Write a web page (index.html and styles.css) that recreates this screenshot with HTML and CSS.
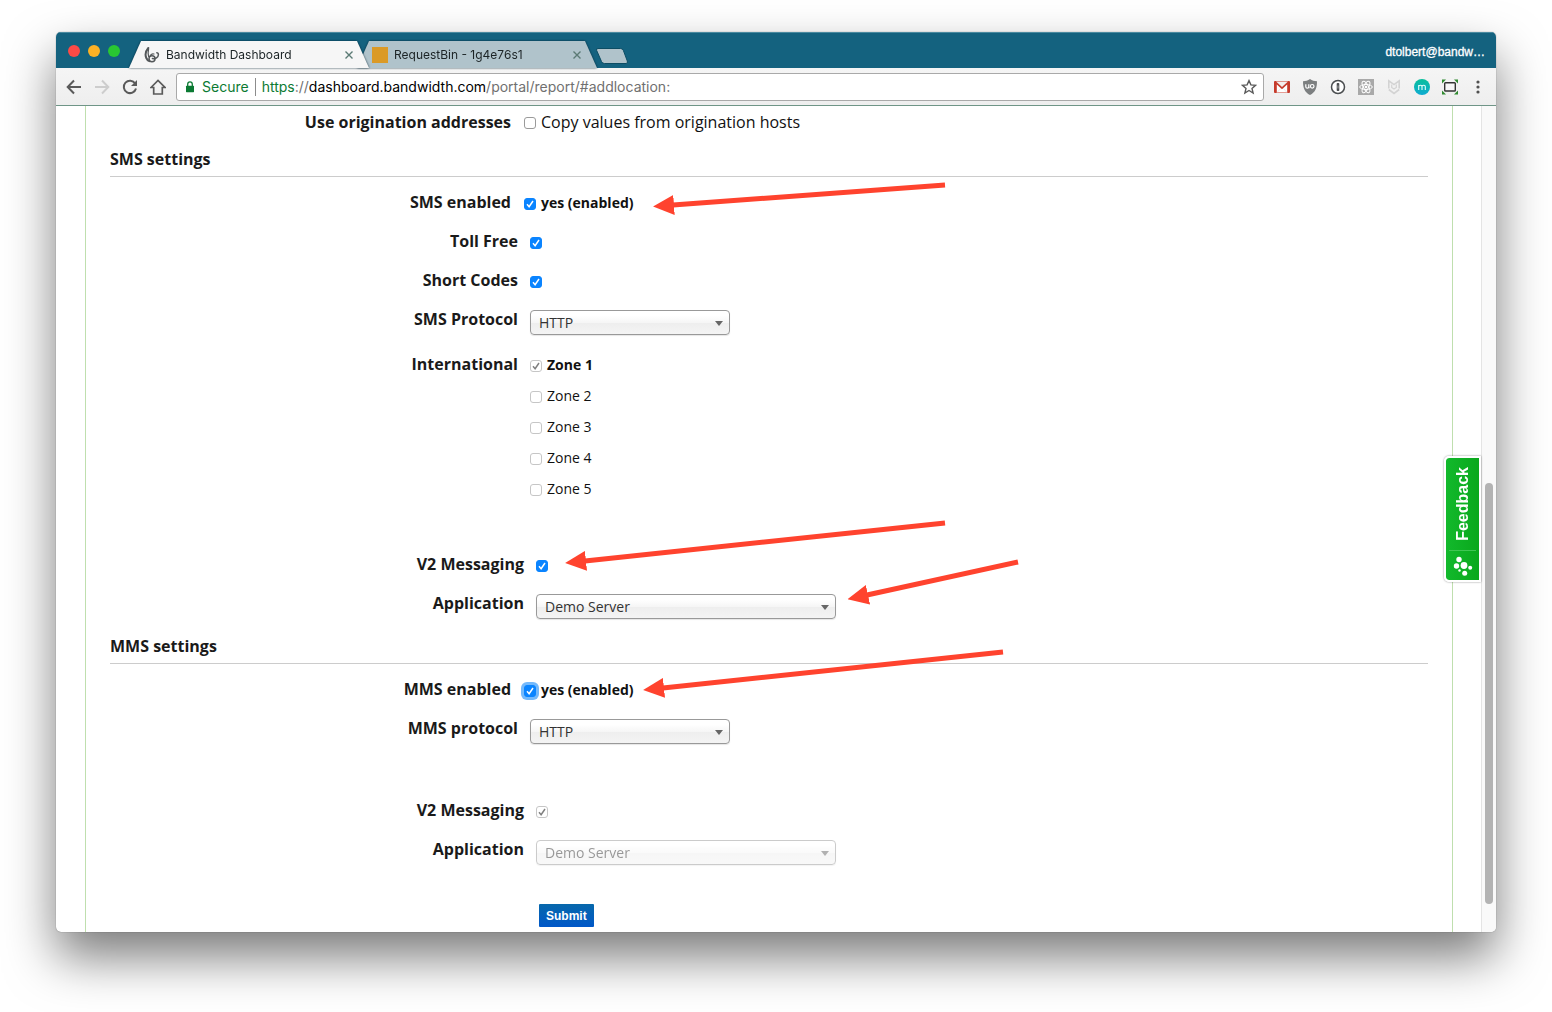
FILE: index.html
```html
<!DOCTYPE html>
<html lang="en">
<head>
<meta charset="utf-8">
<title>Bandwidth Dashboard</title>
<link rel="stylesheet" href="styles.css">
</head>
<body>
<div class="window">
  <header class="titlebar">
    <div class="lights">
      <button class="light light-close" aria-label="Close window"></button>
      <button class="light light-min" aria-label="Minimize window"></button>
      <button class="light light-zoom" aria-label="Zoom window"></button>
    </div>
    <div class="tabs">
      <div class="tab tab-active">
        <div class="tab-shape">
          <svg class="favicon" viewBox="0 0 16 16" fill="none" stroke="#54585a" stroke-linecap="round">
            <path stroke-width="2" d="M4.300 1C1.800 4 1 8 2.300 11c.7 1.600 1.700 2.600 3 3.200"/>
            <path stroke-width="1.200" d="M4.600 2C3.900 5 4 7.500 4.600 9.500"/>
            <circle stroke-width="1.500" cx="8" cy="11.700" r="3"/>
            <path stroke-width="1.200" d="M6 9.300c.6-1.700 2.400-2.800 4-2.300"/>
            <path stroke-width="1.500" d="M8.400 11.500c3 .6 5.900-1.200 6-3.800 0-1.200-.7-1.900-1.600-1.900"/>
          </svg>
          <span class="tab-title">Bandwidth Dashboard</span>
          <button class="tab-close" aria-label="Close tab"><svg viewBox="0 0 8 8"><path d="M0.500 0.500l7 7M7.500 0.500l-7 7"/></svg></button>
        </div>
      </div>
      <div class="tab">
        <div class="tab-shape">
          <span class="favicon favicon-bin"></span>
          <span class="tab-title">RequestBin - 1g4e76s1</span>
          <button class="tab-close" aria-label="Close tab"><svg viewBox="0 0 8 8"><path d="M0.500 0.500l7 7M7.500 0.500l-7 7"/></svg></button>
        </div>
      </div>
      <button class="new-tab" aria-label="New tab">
        <svg viewBox="0 0 34 18"><path d="M3 1.500h22.500q2 0 2.800 1.800l4 10.700q.9 2.500-1.300 2.500H9.500q-2.200 0-3-2L1.600 3.300Q1 1.500 3 1.500z" fill="#b0c3cb" stroke="#0d4d64"/></svg>
      </button>
    </div>
    <span class="account">dtolbert@bandw…</span>
  </header>

  <nav class="toolbar" aria-label="Browser toolbar">
    <div class="group">
      <button class="tool" aria-label="Back"><svg viewBox="0 0 16 16" class="line"><path d="M15 8H2M8 1.500L1.700 8 8 14.500"/></svg></button>
      <button class="tool tool-off" aria-label="Forward" disabled><svg viewBox="0 0 16 16" class="line"><path d="M1 8h13M8 1.500L14.300 8 8 14.500"/></svg></button>
      <button class="tool" aria-label="Reload"><svg viewBox="0 0 16 16" class="line"><path d="M13.200 4.500A6.200 6.200 0 1 0 14 9.500"/><path d="M15 1v6H9z" fill="#5a5a5a" stroke="none"/></svg></button>
      <button class="tool" aria-label="Home"><svg viewBox="0 0 16 16" class="line"><path d="M1 8.500L8 1.400l7 7.100h-2.700V15H3.700V8.500z" stroke-width="1.700"/></svg></button>
    </div>
    <div class="omnibox">
      <svg class="lock" viewBox="0 0 10 12"><path d="M2.700 5V3.200a2.300 2.300 0 0 1 4.600 0V5" fill="none" stroke="#0b7a33" stroke-width="1.300"/><rect x="1" y="4.800" width="8" height="6.400" rx=".6" fill="#0b7a33"/></svg>
      <span class="secure">Secure</span>
      <div class="url" contenteditable="true" role="textbox" aria-label="Address" spellcheck="false"><span class="url-scheme">https</span><span class="url-rest">://</span>dashboard.bandwidth.com<span class="url-rest">/portal/report/#addlocation:</span></div>
      <button class="star" aria-label="Bookmark this page"><svg viewBox="0 0 16 16"><path d="M8 1.600l1.900 4.300 4.600.4-3.500 3.100 1.100 4.600L8 11.500 3.900 14 5 9.400 1.500 6.300l4.600-.4z" fill="none" stroke="#5a5a5a" stroke-width="1.400"/></svg></button>
    </div>
    <div class="group">
      <button class="tool" aria-label="Gmail"><svg viewBox="0 0 16 16"><rect y="2" width="16" height="12" rx="1" fill="#c63a2b"/><path d="M2.800 13.500V5.500L8 10.200l5.200-4.700v8z" fill="#fff"/><path d="M2 2.500h12L8 8z" fill="#f3eeee"/><path d="M3 13.500l3.600-4M13 13.500l-3.600-4" stroke="#ddd" stroke-width=".7"/></svg></button>
      <button class="tool" aria-label="uBlock"><svg viewBox="0 0 16 16"><path d="M8 0c2 1.500 4.500 2.200 7 2.200C15 9 13.500 13 8 16 2.500 13 1 9 1 2.200 3.500 2.200 6 1.500 8 0z" fill="#7c7f80"/><path d="M3.800 5.300v2.400a1.500 1.500 0 0 0 3 0V5.300M7 9.300V8" fill="none" stroke="#fff" stroke-width="1.200"/><circle cx="10.200" cy="7.300" r="1.800" fill="none" stroke="#fff" stroke-width="1.200"/></svg></button>
      <button class="tool" aria-label="1Password"><svg viewBox="0 0 16 16"><circle cx="8" cy="8" r="6.500" fill="#fff" stroke="#4b4e50" stroke-width="1.500"/><rect x="6.700" y="3.900" width="2.600" height="8.200" rx=".8" fill="#4b4e50"/><path d="M8 6.500v3" stroke="#bbb" stroke-width=".8"/></svg></button>
      <button class="tool" aria-label="React tools"><svg viewBox="0 0 16 16"><rect width="16" height="16" fill="#a9a9a9"/><g fill="none" stroke="#fff"><ellipse cx="8" cy="8" rx="6.300" ry="2.500"/><ellipse cx="8" cy="8" rx="6.300" ry="2.500" transform="rotate(60 8 8)"/><ellipse cx="8" cy="8" rx="6.300" ry="2.500" transform="rotate(120 8 8)"/></g><circle cx="8" cy="8" r="1.300" fill="#fff"/></svg></button>
      <button class="tool" aria-label="SiteAdvisor"><svg viewBox="0 0 16 16" fill="none" stroke="#d3d3d3" stroke-width="1.600"><path d="M2.800 9.500V1.800L8 5.600l5.200-3.800v7.700"/><path d="M2.800 10.500L8 14.500l5.200-4"/><path d="M5.700 5.500v3L8 10l2.300-1.500v-3" stroke-width="1.200"/></svg></button>
      <button class="tool" aria-label="Momentum"><svg viewBox="0 0 16 16"><defs><linearGradient id="teal" x1="0" y1="0" x2="0" y2="1"><stop offset="0" stop-color="#08bf9b"/><stop offset="1" stop-color="#0fabd2"/></linearGradient></defs><circle cx="8" cy="8" r="8" fill="url(#teal)"/><path d="M4.700 11V6M4.700 7.500c.3-1.600 3.300-1.800 3.300.3V11M8 7.500c.3-1.600 3.300-1.800 3.300.3V11" fill="none" stroke="#e8fffb" stroke-width="1.100"/></svg></button>
      <button class="tool" aria-label="Window resizer"><svg viewBox="0 0 16 16"><rect x="2.700" y="3.800" width="10.600" height="8.200" rx=".8" fill="#f6f6f6" stroke="#333" stroke-width="1.400"/><path d="M0 .5h4L0 4.500zM16 .5h-4l4 4zM0 15.500h4l-4-4zM16 15.500h-4l4-4z" fill="#2f8a2f"/></svg></button>
      <button class="tool" aria-label="Menu"><svg viewBox="0 0 16 16" fill="#505050"><circle cx="8" cy="3" r="1.600"/><circle cx="8" cy="8" r="1.600"/><circle cx="8" cy="13" r="1.600"/></svg></button>
    </div>
  </nav>

  <div class="viewport">
    <main class="page">
      <form class="form">
        <div class="row">
          <label class="name" for="origin">Use origination addresses</label>
          <div class="choice choice-large"><input type="checkbox" id="origin"><label for="origin">Copy values from origination hosts</label></div>
        </div>

        <section class="section">
          <h2>SMS settings</h2>
          <div class="rows">
            <div class="row">
              <label class="name" for="sms">SMS enabled</label>
              <div class="choice"><input type="checkbox" id="sms" checked><label class="strong" for="sms">yes (enabled)</label></div>
            </div>
            <div class="row nested">
              <label class="name" for="tollfree">Toll Free</label>
              <div class="choice"><input type="checkbox" id="tollfree" checked></div>
            </div>
            <div class="row nested">
              <label class="name" for="short">Short Codes</label>
              <div class="choice"><input type="checkbox" id="short" checked></div>
            </div>
            <div class="row nested">
              <label class="name" for="smsproto">SMS Protocol</label>
              <div class="pick"><select id="smsproto"><option>HTTP</option></select></div>
            </div>
            <div class="row nested" role="group" aria-labelledby="intl">
              <span class="name" id="intl">International</span>
              <div class="zones">
                <div class="choice"><input type="checkbox" id="zone1" checked disabled><label class="strong" for="zone1">Zone 1</label></div>
                <div class="choice"><input type="checkbox" id="zone2" disabled><label for="zone2">Zone 2</label></div>
                <div class="choice"><input type="checkbox" id="zone3" disabled><label for="zone3">Zone 3</label></div>
                <div class="choice"><input type="checkbox" id="zone4" disabled><label for="zone4">Zone 4</label></div>
                <div class="choice"><input type="checkbox" id="zone5" disabled><label for="zone5">Zone 5</label></div>
              </div>
            </div>
          </div>
          <div class="rows rows-later">
            <div class="row deep">
              <label class="name" for="smsv2">V2 Messaging</label>
              <div class="choice"><input type="checkbox" id="smsv2" checked></div>
            </div>
            <div class="row deep">
              <label class="name" for="smsapp">Application</label>
              <div class="pick pick-wide"><select id="smsapp"><option>Demo Server</option></select></div>
            </div>
          </div>
        </section>

        <section class="section">
          <h2>MMS settings</h2>
          <div class="rows">
            <div class="row">
              <label class="name" for="mms">MMS enabled</label>
              <div class="choice"><input class="ring" type="checkbox" id="mms" checked><label class="strong" for="mms">yes (enabled)</label></div>
            </div>
            <div class="row nested">
              <label class="name" for="mmsproto">MMS protocol</label>
              <div class="pick"><select id="mmsproto"><option>HTTP</option></select></div>
            </div>
          </div>
          <div class="rows rows-later">
            <div class="row deep">
              <label class="name" for="mmsv2">V2 Messaging</label>
              <div class="choice"><input type="checkbox" id="mmsv2" checked disabled></div>
            </div>
            <div class="row deep">
              <label class="name" for="mmsapp">Application</label>
              <div class="pick pick-wide"><select id="mmsapp" disabled><option>Demo Server</option></select></div>
            </div>
          </div>
        </section>

        <button class="submit" type="submit">Submit</button>
      </form>
    </main>

    <div class="scrollbar"><div class="thumb"></div></div>

    <button class="feedback">
      <span class="feedback-text">Feedback</span>
      <span class="feedback-mark"><svg viewBox="0 0 20 20" fill="#fff"><circle cx="6" cy="3.500" r="2.700"/><circle cx="3.500" cy="10" r="2.700"/><circle cx="11" cy="9.500" r="3.400"/><circle cx="17.200" cy="11.700" r="2"/><circle cx="11.700" cy="17.300" r="2.500"/><circle cx="6.500" cy="14.500" r="1.200"/></svg></span>
    </button>

    <svg class="arrows" viewBox="0 0 1440 826" aria-hidden="true">
      <defs>
        <marker id="head" markerUnits="userSpaceOnUse" markerWidth="21" markerHeight="20" refX="1" refY="10" orient="auto"><path d="M0 0l21 10L0 20z" fill="#ff432e"/></marker>
      </defs>
      <g stroke="#ff432e" stroke-width="5">
        <line x1="889" y1="79" x2="617" y2="99" marker-end="url(#head)"/>
        <line x1="889" y1="417" x2="529" y2="455" marker-end="url(#head)"/>
        <line x1="962" y1="456" x2="811" y2="489" marker-end="url(#head)"/>
        <line x1="947" y1="546" x2="607" y2="582" marker-end="url(#head)"/>
      </g>
    </svg>
  </div>
</div>
</body>
</html>
```
FILE: styles.css
```css
* { box-sizing: border-box; }

body {
  margin: 0;
  padding: 32px 56px 80px;
  background: #fff;
  color: #1a1a1a;
  font-family: "Open Sans", "Noto Sans", sans-serif;
}

button {
  margin: 0;
  padding: 0;
  border: 0;
  background: none;
  font: inherit;
}

svg { display: block; }

.window {
  border-radius: 5px;
  overflow: hidden;
  background: #fff;
  box-shadow: 0 0 1px rgba(0, 0, 0, .6), 0 25px 50px rgba(0, 0, 0, .52);
}

/* Title bar and tabs */

.titlebar {
  display: flex;
  height: 36px;
  background: #14627f;
  box-shadow: inset 0 1px #4a8aa0;
  font-family: Inter, Roboto, sans-serif;
}

.lights {
  display: flex;
  align-items: center;
  gap: 8px;
  padding: 2px 9px 0 12px;
}

.light { width: 12px; height: 12px; border-radius: 50%; }
.light-close { background: #fd4a46; }
.light-min { background: #fdb125; }
.light-zoom { background: #29c732; }

.tabs { display: flex; flex: 1; align-items: flex-end; }

.tab {
  width: 240px;
  margin-right: -12px;
  filter: drop-shadow(0 0 1px rgba(0, 30, 45, .8));
}

.tab-active { position: relative; z-index: 1; }

.tab-shape {
  display: flex;
  align-items: center;
  gap: 6px;
  height: 27px;
  padding: 0 16px 0 15px;
  background: #b0c3cb;
  clip-path: polygon(0 100%, 12px 0, calc(100% - 12px) 0, 100% 100%);
}

.tab-active .tab-shape { background: #f6f6f6; }

.favicon { width: 16px; height: 16px; }
.favicon-bin { background: #db9a27; }

.tab-title { flex: 1; color: #1c2426; font-size: 12px; }

.tab-close svg {
  width: 8px;
  height: 8px;
  fill: none;
  stroke: #5b7a74;
  stroke-width: 1.4;
}

.new-tab { margin: 0 0 3px 10px; }
.new-tab svg { width: 34px; height: 18px; }

.account {
  padding: 0 11px 0 0;
  color: #fff;
  font: 12px/40px "Liberation Sans", Arial, sans-serif;
  -webkit-text-stroke: .3px #fff;
}

/* Toolbar */

.toolbar {
  display: flex;
  align-items: center;
  gap: 4px;
  height: 38px;
  padding: 0 4px;
  border-bottom: 1px solid #6f9587;
  background: linear-gradient(#f5f5f5, #eee);
}

.group { display: flex; }

.tool {
  display: grid;
  place-items: center;
  width: 28px;
  height: 28px;
}

.tool svg { width: 16px; height: 16px; }
.tool .line { fill: none; stroke: #5a5a5a; stroke-width: 2; }
.tool-off .line { stroke: #cdcdcd; }

.omnibox {
  display: flex;
  flex: 1;
  align-items: center;
  height: 28px;
  padding: 0 6px 0 8px;
  border: 1px solid #a9a9a9;
  border-radius: 3px;
  background: #fff;
  color: #000;
  font: 14px/18px Inter, Roboto, sans-serif;
}

.lock { width: 10px; height: 12px; }

.secure {
  margin: 0 6px 0 7px;
  padding-right: 6px;
  border-right: 1px solid #8c8c8c;
  color: #0b7a33;
}

.url { flex: 1; outline: 0; }
.url-scheme { color: #0b7a33; }
.url-rest { color: #707070; }
.star svg { width: 16px; height: 16px; }

/* Page */

.viewport {
  position: relative;
  display: flex;
  overflow: hidden;
}

.page { flex: 1; padding: 0 28px 0 29px; }

.form {
  padding: 4px 24px 5px;
  border: solid #bfdfae;
  border-width: 0 1px;
}

.section { margin-top: 13px; }

h2 {
  margin: 0 0 13px;
  padding-bottom: 5px;
  border-bottom: 1px solid #ccc;
  font-size: 16px;
  line-height: 24px;
}

.rows { display: grid; gap: 15px; }
.rows-later { margin-top: 52px; }

.row {
  display: grid;
  grid-template-columns: 401px 1fr;
  column-gap: 13px;
}

.nested,
.deep { column-gap: 12px; }
.nested { padding-left: 7px; }
.deep { padding-left: 13px; }

.name {
  font-size: 16px;
  font-weight: bold;
  line-height: 24px;
  text-align: right;
}

.choice {
  display: flex;
  align-items: center;
  gap: 5px;
  height: 24px;
  padding-top: 2px;
  color: #111;
  font-size: 14px;
  line-height: 22px;
}

.choice-large { padding-top: 0; font-size: 16px; }
.strong { font-weight: bold; }
.zones { display: grid; gap: 7px; }

input[type="checkbox"] {
  appearance: none;
  width: 12px;
  height: 12px;
  margin: 2px 0 0;
  border: 1px solid #9a9a9a;
  border-radius: 3px;
  background: #fff center / 10px 10px no-repeat;
}

input[type="checkbox"]:checked {
  border-color: #0a84ff;
  background-color: #0a84ff;
  background-image: url("data:image/svg+xml,%3Csvg xmlns='http://www.w3.org/2000/svg' viewBox='0 0 10 10'%3E%3Cpath d='M2 5.300l2.100 2.400L8 2' fill='none' stroke='white' stroke-width='1.500'/%3E%3C/svg%3E");
}

input[type="checkbox"]:disabled { border-color: #c6c6c6; }

input[type="checkbox"]:checked:disabled {
  background-color: #fff;
  background-image: url("data:image/svg+xml,%3Csvg xmlns='http://www.w3.org/2000/svg' viewBox='0 0 10 10'%3E%3Cpath d='M2 5.300l2.100 2.400L8 2' fill='none' stroke='%23808080' stroke-width='1.500'/%3E%3C/svg%3E");
}

input.ring { box-shadow: 0 0 0 3px #74b9fb; }

.pick { width: 200px; padding: 3px 0 2px; }
.pick-wide { width: 300px; }

select {
  display: block;
  appearance: none;
  width: 100%;
  height: 25px;
  padding: 0 24px 0 8px;
  border: 1px solid #999;
  border-radius: 4px;
  background:
    url("data:image/svg+xml,%3Csvg xmlns='http://www.w3.org/2000/svg' viewBox='0 0 8 5'%3E%3Cpath d='M0 0h8L4 5z' fill='%23666'/%3E%3C/svg%3E") right 6px top 10px / 8px 5px no-repeat,
    linear-gradient(#fff 20%, #f6f6f6 50%, #eee 52%, #f4f4f4 100%);
  box-shadow: 0 1px 1px rgba(0, 0, 0, .1);
  color: #333;
  font: 14px "Open Sans", "Noto Sans", sans-serif;
}

select:disabled { opacity: .5; }

.submit {
  display: block;
  height: 23px;
  margin: 37px 0 0 429px;
  padding: 0 7px;
  border-radius: 1px;
  background: linear-gradient(#0768ab, #0057c8);
  color: #fff;
  font: bold 12px "Liberation Sans", Arial, sans-serif;
}

.scrollbar {
  display: flex;
  width: 15px;
  padding: 377px 3px 28px;
  border-left: 1px solid #e4e4e4;
  background: #f9f9f9;
}

.thumb { flex: 1; border-radius: 4px; background: #b3b3b3; }

.feedback {
  position: absolute;
  top: 350px;
  right: 15px;
  display: flex;
  flex-direction: column;
  align-items: center;
  justify-content: space-between;
  width: 37px;
  height: 126px;
  padding: 9px 3px 4px;
  border: 2px solid #fff;
  border-radius: 5px 0 0 5px;
  background: linear-gradient(90deg, #12b92c, #0aa81c) padding-box;
  box-shadow: 0 0 2px rgba(0, 0, 0, .5);
  color: #fff;
  font: bold 16px/18px "Liberation Sans", Arial, sans-serif;
}

.feedback-text { writing-mode: vertical-rl; transform: rotate(180deg); }

.feedback-mark {
  display: flex;
  justify-content: center;
  align-self: stretch;
  padding-top: 5px;
  border-top: 1px solid #40c653;
}

.feedback-mark svg { width: 20px; height: 20px; }

.arrows {
  position: absolute;
  top: 0;
  left: 0;
  width: 1440px;
  height: 826px;
  pointer-events: none;
}
```
